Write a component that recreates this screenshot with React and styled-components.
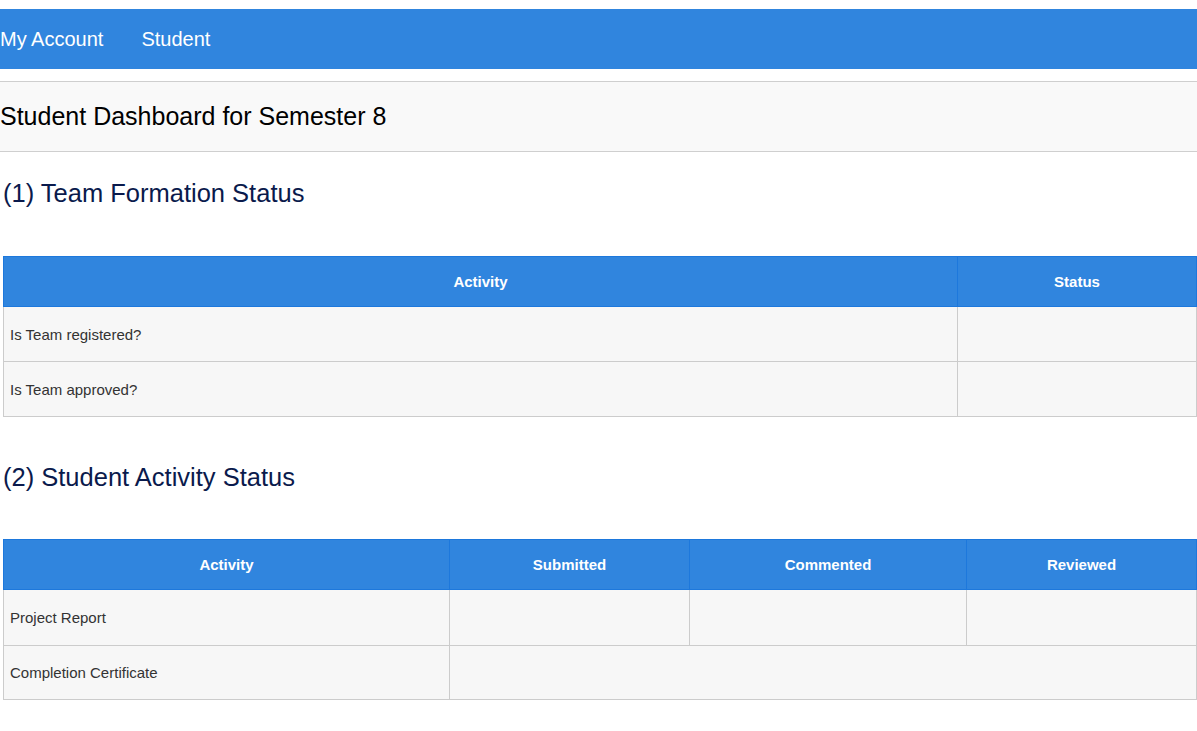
import React from 'react';
import styled, { createGlobalStyle } from 'styled-components';

const GlobalStyle = createGlobalStyle`
  html, body {
    margin: 0;
    padding: 0;
    background: #fff;
    font-family: "Liberation Sans", Arial, sans-serif;
  }
`;

const Page = styled.div`
  width: 1197px;
  padding-top: 9px;
`;

const NavBar = styled.nav`
  height: 60px;
  background: #3085de;
  display: flex;
  align-items: center;
  gap: 38px;
`;

const NavLink = styled.a`
  color: #fff;
  font-size: 20px;
  text-decoration: none;
  cursor: pointer;
`;

const TitleBar = styled.div`
  margin-top: 12px;
  height: 69px;
  background: #f9f9f9;
  border-top: 1px solid #cfcfcf;
  border-bottom: 1px solid #cfcfcf;
  display: flex;
  align-items: center;
  font-size: 25px;
  color: #000;
`;

const Content = styled.div`
  padding: 0 1px 0 3px;
`;

const SectionTitle = styled.h2`
  margin: 0;
  font-weight: 400;
  font-size: 25.5px;
  color: #0a1a4c;
  height: ${p => p.$height}px;
  padding-top: ${p => p.$top}px;
  box-sizing: border-box;
`;

const Table = styled.table`
  width: 100%;
  border-collapse: collapse;
  table-layout: fixed;
  border: 1px solid #ccc;
`;

const Th = styled.th`
  background: #3085de;
  color: #fff;
  font-size: 15px;
  font-weight: 700;
  height: 49px;
  padding: 0;
  border: 1px solid #1d78dc;
  text-align: center;
`;

const Td = styled.td`
  background: #f7f7f7;
  color: #333;
  font-size: 15px;
  height: ${p => p.$h || 54}px;
  padding: 0 6px;
  border: 1px solid #ccc;
`;

const Gap = styled.div`
  height: ${p => p.$h}px;
`;

export default function App() {
  return (
    <Page>
      <GlobalStyle />
      <NavBar>
        <NavLink>My Account</NavLink>
        <NavLink>Student</NavLink>
      </NavBar>
      <TitleBar>Student Dashboard for Semester 8</TitleBar>
      <Content>
        <SectionTitle $top={27} $height={104}>(1) Team Formation Status</SectionTitle>
        <Table>
          <colgroup>
            <col style={{ width: 954 }} />
            <col style={{ width: 239 }} />
          </colgroup>
          <thead>
            <tr>
              <Th>Activity</Th>
              <Th>Status</Th>
            </tr>
          </thead>
          <tbody>
            <tr>
              <Td>Is Team registered?</Td>
              <Td />
            </tr>
            <tr>
              <Td>Is Team approved?</Td>
              <Td />
            </tr>
          </tbody>
        </Table>
        <SectionTitle $top={46} $height={122}>(2) Student Activity Status</SectionTitle>
        <Table>
          <colgroup>
            <col style={{ width: 446 }} />
            <col style={{ width: 240 }} />
            <col style={{ width: 277 }} />
            <col style={{ width: 230 }} />
          </colgroup>
          <thead>
            <tr>
              <Th>Activity</Th>
              <Th>Submitted</Th>
              <Th>Commented</Th>
              <Th>Reviewed</Th>
            </tr>
          </thead>
          <tbody>
            <tr>
              <Td $h={55}>Project Report</Td>
              <Td $h={55} />
              <Td $h={55} />
              <Td $h={55} />
            </tr>
            <tr>
              <Td $h={53}>Completion Certificate</Td>
              <Td $h={53} colSpan={3} />
            </tr>
          </tbody>
        </Table>
        <Gap $h={30} />
      </Content>
    </Page>
  );
}
